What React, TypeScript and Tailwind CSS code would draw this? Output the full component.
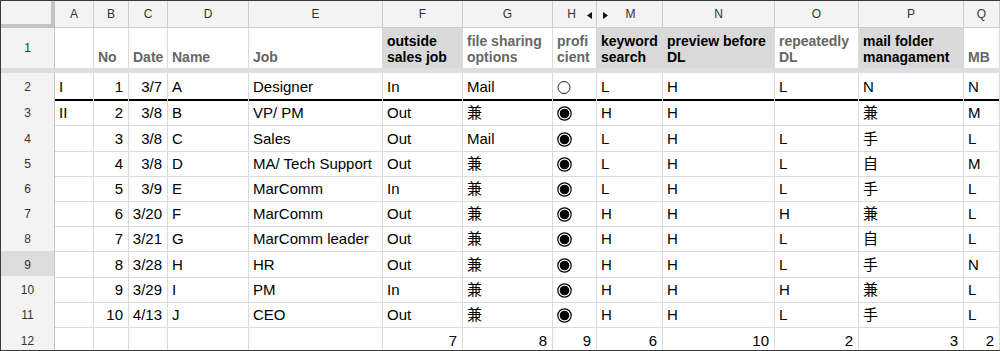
const COLS =
  "grid grid-cols-[54px_39px_35px_39px_81px_134px_80px_90px_44px_66px_112px_84px_105px_36px]";

type Cell = string | number | "o" | "x";

const letters = ["A", "B", "C", "D", "E", "F", "G", "H", "M", "N", "O", "P", "Q"];
// alignment of each data column: l = left, r = right, c = radio
const align = ["l", "r", "r", "l", "l", "l", "l", "c", "l", "l", "l", "l", "l"];

const rows: Cell[][] = [
  ["I", 1, "3/7", "A", "Designer", "In", "Mail", "o", "L", "H", "L", "N", "N"],
  ["II", 2, "3/8", "B", "VP/ PM", "Out", "兼", "x", "H", "H", "", "兼", "M"],
  ["", 3, "3/8", "C", "Sales", "Out", "Mail", "x", "L", "H", "L", "手", "L"],
  ["", 4, "3/8", "D", "MA/ Tech Support", "Out", "兼", "x", "L", "H", "L", "自", "M"],
  ["", 5, "3/9", "E", "MarComm", "In", "兼", "x", "L", "H", "L", "手", "L"],
  ["", 6, "3/20", "F", "MarComm", "Out", "兼", "x", "H", "H", "H", "兼", "L"],
  ["", 7, "3/21", "G", "MarComm leader", "Out", "兼", "x", "H", "H", "L", "自", "L"],
  ["", 8, "3/28", "H", "HR", "Out", "兼", "x", "H", "H", "L", "手", "N"],
  ["", 9, "3/29", "I", "PM", "In", "兼", "x", "H", "H", "H", "兼", "L"],
  ["", 10, "4/13", "J", "CEO", "Out", "兼", "x", "H", "H", "L", "手", "L"],
];

const sums: Cell[] = ["", "", "", "", "", 7, 8, 9, 6, 10, 2, 3, 2];

const heights = [
  "h-[26px]",
  "h-[26px]",
  "h-[25px]",
  "h-[25px]",
  "h-[25px]",
  "h-[25px]",
  "h-[26px]",
  "h-[25px]",
  "h-[25px]",
  "h-[26px]",
];

function Radio({ on }: { on: boolean }) {
  return on ? (
    <svg width="15" height="15" viewBox="0 0 15 15">
      <circle cx="7.5" cy="7.5" r="6.7" fill="white" stroke="black" strokeWidth="1.2" />
      <circle cx="7.5" cy="7.5" r="4.8" fill="black" />
    </svg>
  ) : (
    <svg width="15" height="15" viewBox="0 0 15 15">
      <circle cx="7" cy="7.5" r="6" fill="white" stroke="#222" strokeWidth="1" />
    </svg>
  );
}

function RowHead({ n, selected }: { n: number | string; selected?: boolean }) {
  return (
    <div
      className={`flex items-center justify-center border-r border-b border-[#c6c6c6] pt-[2px] text-[12px] text-[#333] ${
        selected ? "bg-[#dcdcdc]" : "bg-[#f3f3f3]"
      }`}
    >
      {n}
    </div>
  );
}

function DataRow({
  n,
  cells,
  h,
  thick,
  selected,
}: {
  n: number;
  cells: Cell[];
  h: string;
  thick?: boolean;
  selected?: boolean;
}) {
  return (
    <div className={`${COLS} ${h}`}>
      <RowHead n={n} selected={selected} />
      {cells.map((c, i) => {
        const a = align[i];
        return (
          <div
            key={i}
            className={`flex items-center border-r border-[#dadada] pt-[3px] ${
              thick ? "border-b-2 border-b-black" : "border-b"
            } ${a === "r" ? "justify-end pr-[5px]" : "pl-[4px]"}`}
          >
            {c === "o" ? <Radio on={false} /> : c === "x" ? <Radio on /> : c}
          </div>
        );
      })}
    </div>
  );
}

function SumRow() {
  return (
    <div className={`${COLS} h-[25px]`}>
      <RowHead n={12} />
      {sums.map((c, i) => (
        <div
          key={i}
          className="flex items-center justify-end border-r border-b border-[#dadada] pt-[3px] pr-[5px]"
        >
          {c}
        </div>
      ))}
    </div>
  );
}

const labels: { lines: string[]; fill?: boolean }[] = [
  { lines: [""] },
  { lines: ["No"] },
  { lines: ["Date"] },
  { lines: ["Name"] },
  { lines: ["Job"] },
  { lines: ["outside", "sales job"], fill: true },
  { lines: ["file sharing", "options"] },
  { lines: ["profi", "cient"] },
  { lines: ["keyword", "search"], fill: true },
  { lines: ["preview before", "DL"], fill: true },
  { lines: ["repeatedly", "DL"] },
  { lines: ["mail folder", "managament"], fill: true },
  { lines: ["MB"] },
];

export default function App() {
  return (
    <div className="h-[351px] w-[1000px] overflow-hidden border-t border-l border-b border-[#3a3a3a] bg-white font-['Liberation_Sans',Arial,'Noto_Sans_CJK_JP',sans-serif] text-[15px] text-black">
      {/* column letters */}
      <div className={`${COLS} h-[27px]`}>
        <div className="border-r-[4px] border-b-[4px] border-[#c4c4c4] bg-[#f3f3f3]" />
        {letters.map((l) => (
          <div
            key={l}
            className="relative flex items-center justify-center border-r border-b border-[#cccccc] bg-[#f3f3f3] text-[12px] text-[#333]"
          >
            {l === "H" && <span className="pr-[6px]">H</span>}
            {l === "M" && <span className="pl-[2px]">M</span>}
            {l !== "H" && l !== "M" && l}
            {l === "H" && (
              <svg className="absolute right-[4px] top-[11px]" width="5" height="7" viewBox="0 0 5 7">
                <path d="M5 0 L0 3.5 L5 7 Z" fill="#111" />
              </svg>
            )}
            {l === "M" && (
              <svg className="absolute left-[6px] top-[11px]" width="5" height="7" viewBox="0 0 5 7">
                <path d="M0 0 L5 3.5 L0 7 Z" fill="#111" />
              </svg>
            )}
          </div>
        ))}
      </div>

      {/* header row 1 */}
      <div className={`${COLS} h-[40px]`}>
        <div className="flex items-center justify-center border-r border-[#c6c6c6] bg-[#f3f3f3] text-[12px] text-[#333]">
          1
        </div>
        {labels.map((lb, i) => (
          <div
            key={i}
            className={`flex flex-col justify-end border-r border-[#dadada] pb-[3px] pl-[4px] text-[14px] font-bold leading-[16px] whitespace-nowrap ${
              lb.fill ? "bg-[#d9d9d9] text-black" : "text-[#666]"
            }`}
          >
            {lb.lines.map((t, j) => (
              <span key={j}>{t}</span>
            ))}
          </div>
        ))}
      </div>

      {/* frozen row divider */}
      <div className="h-[5px] bg-[#dadfe6]" />

      {rows.map((r, i) => (
        <DataRow
          key={i}
          n={i + 2}
          cells={r}
          h={heights[i]}
          thick={i === 0}
          selected={i === 7}
        />
      ))}
      <SumRow />
    </div>
  );
}
